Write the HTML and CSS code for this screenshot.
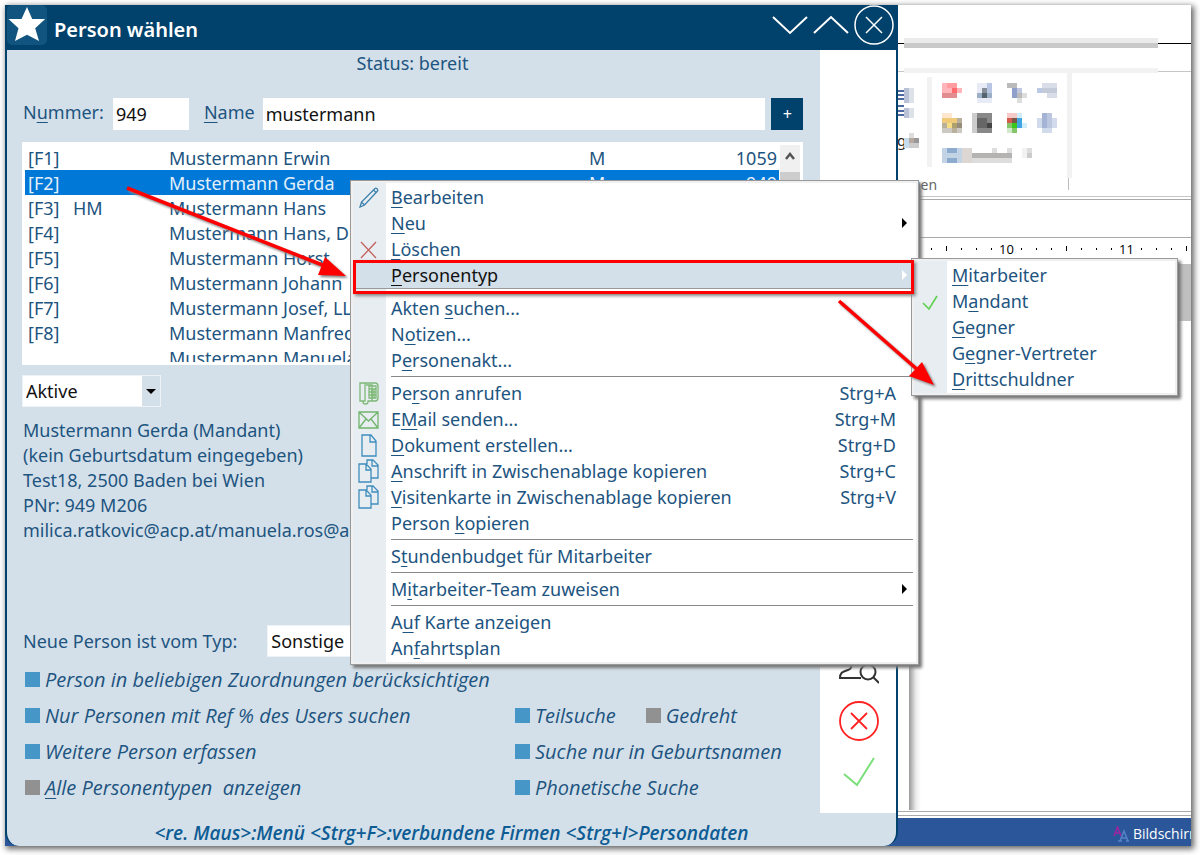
FILE: index.html
```html
<!DOCTYPE html>
<html lang="de">
<head>
<meta charset="utf-8">
<title>Person wählen</title>
<link rel="stylesheet" href="styles.css">
</head>
<body>
<main class="stage">
  <div class="dialog-area">
    <section class="dialog">
      <header class="titlebar">
        <span class="logo"><svg viewBox="0 0 40 40" width="40" height="40"><path fill="#fff" d="M20 2l5.200 12h13l-10 9.300L32 36l-12-6.300L8 36l3.500-12.700L1.500 14h13z"/></svg></span>
        <h1>Person wählen</h1>
        <div class="window-buttons">
          <button aria-label="Nach unten"><svg viewBox="0 0 36 20" width="36" height="20"><path d="M1 2l17 16L35 2"/></svg></button>
          <button aria-label="Nach oben"><svg viewBox="0 0 36 20" width="36" height="20"><path d="M1 18L18 2l17 16"/></svg></button>
          <button aria-label="Schließen"><svg class="thin" viewBox="0 0 40 40" width="40" height="40"><circle cx="20" cy="20" r="19"/><path d="M12 12l16 16M28 12L12 28"/></svg></button>
        </div>
      </header>
      <div class="body">
        <div class="content">
          <p class="status">Status: bereit</p>
          <div class="search">
            <label for="nr">N<u>u</u>mmer:</label>
            <input id="nr" class="nr" value="949">
            <label for="name"><u>N</u>ame</label>
            <input id="name" class="name" value="mustermann">
            <button class="plus">+</button>
          </div>
          <div class="list">
            <div class="rows">
              <table>
                <colgroup><col class="c-key"><col class="c-tag"><col><col class="c-kind"><col class="c-no"></colgroup>
                <tr><td>[F1]</td><td></td><td>Mustermann Erwin</td><td>M</td><td>1059</td></tr>
                <tr class="selected"><td>[F2]</td><td></td><td>Mustermann Gerda</td><td>M</td><td>949</td></tr>
                <tr><td>[F3]</td><td>HM</td><td>Mustermann Hans</td><td></td><td></td></tr>
                <tr><td>[F4]</td><td></td><td>Mustermann Hans, Dr.</td><td></td><td></td></tr>
                <tr><td>[F5]</td><td></td><td>Mustermann Horst</td><td></td><td></td></tr>
                <tr><td>[F6]</td><td></td><td>Mustermann Johann</td><td></td><td></td></tr>
                <tr><td>[F7]</td><td></td><td>Mustermann Josef, LL.M.</td><td></td><td></td></tr>
                <tr><td>[F8]</td><td></td><td>Mustermann Manfred</td><td></td><td></td></tr>
                <tr><td></td><td></td><td>Mustermann Manuela</td><td></td><td></td></tr>
              </table>
            </div>
            <div class="scroll">
              <button aria-label="Nach oben blättern"><svg viewBox="0 0 20 21" width="20" height="21"><path d="M6 14l4-5 4 5" fill="none" stroke="#555" stroke-width="2.500"/></svg></button>
              <div class="thumb"></div>
            </div>
          </div>
          <div class="combo filter">
            <select aria-label="Filter"><option>Aktive</option></select>
            <span class="drop"></span>
          </div>
          <p class="info">Mustermann Gerda (Mandant)<br>(kein Geburtsdatum eingegeben)<br>Test18, 2500 Baden bei Wien<br>PNr: 949 M206<br>milica.ratkovic@acp.at/manuela.ros@acp.at</p>
          <div class="type-row">
            <label for="typ">Neue Person ist vom Typ:</label>
            <div class="combo typ"><select id="typ"><option>Sonstige</option></select></div>
          </div>
          <div class="checks">
            <label class="wide"><input type="checkbox" checked>Person in beliebigen Zuordnungen berücksichtigen</label>
            <label><input type="checkbox" checked>Nur Personen mit Ref % des Users suchen</label>
            <div class="pair">
              <label><input type="checkbox" checked>Teilsuche</label>
              <label><input type="checkbox">Gedreht</label>
            </div>
            <label><input type="checkbox" checked>Weitere Person erfassen</label>
            <label><input type="checkbox" checked>Suche nur in Geburtsnamen</label>
            <label><input type="checkbox"><span class="pre"><u>A</u>lle Personentypen  anzeigen</span></label>
            <label><input type="checkbox" checked>Phonetische Suche</label>
          </div>
        </div>
        <aside class="side">
          <button aria-label="Person suchen"><svg viewBox="0 0 40 40" width="40" height="40" fill="none" stroke="#333" stroke-width="2"><circle cx="15" cy="6" r="7"/><path d="M22 31H1c0-6 3-6 8-8 4-1 4-4 3-8"/><circle cx="29" cy="25" r="7.500"/><path d="M34 30l6 6"/></svg></button>
          <button aria-label="Abbrechen"><svg viewBox="0 0 40 40" width="40" height="40" fill="none" stroke="#f22" stroke-width="1.800"><circle cx="20" cy="20" r="19"/><path d="M12 12l16 16M28 12L12 28"/></svg></button>
          <button aria-label="OK"><svg viewBox="0 0 40 32" width="40" height="32" fill="none" stroke="#7be07b" stroke-width="2"><path d="M5 19l13 11L35 3"/></svg></button>
        </aside>
      </div>
      <footer>&lt;re. Maus&gt;:Menü &lt;Strg+F&gt;:verbundene Firmen &lt;Strg+I&gt;Persondaten</footer>
    </section>
  </div>

  <section class="word">
    <div class="caption"><div class="smear"></div></div>
    <div class="tabs"><div class="smear"></div></div>
    <div class="ribbon">
      <svg viewBox="0 0 180 106" width="180" height="106" shape-rendering="crispEdges">
        <path fill="#f2f2f2" d="M29 5h5v90h-5zM169 0h5v106h-5z"/>
        <path stroke="#5068a0" stroke-width="1.500" d="M0 19h6M0 23h6M0 27h6M0 34h6M0 39h6M0 43h6"/>
        <text x="-1" y="74" font-size="15" fill="#222">g</text>
        <g transform="translate(6,16) scale(5)" fill="#b9c2d6"><path d="M0 0h1v3h-1zM0 4h1v2h-1z"/><path fill="#dde1e8" d="M1 0h1v3h-1zM1 4h1v2h-1z"/></g>
        <g transform="translate(6,61) scale(5)"><path fill="#c4dcee" d="M0 1h1v2h-1z"/><path fill="#ddd" d="M1 0h1v1h-1z"/><path fill="#b7a9a2" d="M1 1h1v1h-1z"/><path fill="#999" d="M2 1h1v1h-1z"/><path fill="#ccc" d="M1 2h2v1h-2z"/></g>
        <g transform="translate(44,11) scale(5)"><path fill="#ffb6ba" d="M0 0h1v2h-1zM1 1h1v1h-1zM3 1h1v1h-1z"/><path fill="#ff9c9f" d="M1 0h2v1h-2z"/><path fill="#ff6a6e" d="M2 1h1v1h-1z"/><path fill="#e28d8f" d="M0 2h3v1h-3z"/></g>
        <g transform="translate(79,11) scale(5)"><path fill="#e7ebf5" d="M0 0h2v2h-2zM0 3h3v1h-3z"/><path fill="#b6c6e4" d="M2 0h1v2h-1z"/><path fill="#868f99" d="M1 1h1v1h-1z"/><path fill="#53646f" d="M1 2h1v1h-1z"/><path fill="#9bafc5" d="M0 2h1v1h-1zM2 2h1v1h-1z"/></g>
        <g transform="translate(109,11) scale(5)"><path fill="#bbb" d="M0 0h2v1h-2zM2 2h1v1h-1z"/><path fill="#8fa0cb" d="M1 1h1v2h-1z"/><path fill="#c0c7df" d="M2 1h1v1h-1z"/><path fill="#ddd" d="M2 3h1v1h-1zM3 2h1v1h-1z"/></g>
        <g transform="translate(139,11) scale(5)"><path fill="#bcc9e5" d="M0 1h1v1h-1z"/><path fill="#d8dde8" d="M1 0h3v1h-3zM2 2h2v1h-2z"/><path fill="#c4cad7" d="M1 1h3v1h-3z"/></g>
        <g transform="translate(44,41) scale(5)"><path fill="#ffe6ce" d="M0 0h2v1h-2z"/><path fill="#efca7b" d="M0 1h3v1h-3z"/><path fill="#f5dd85" d="M1 2h1v1h-1z"/><path fill="#b8b09a" d="M0 2h1v1h-1zM3 1h1v1h-1zM2 3h1v1h-1z"/><path fill="#ada06f" d="M2 2h1v1h-1z"/><path fill="#958d79" d="M3 2h1v1h-1z"/><path fill="#cbc9c2" d="M0 3h2v1h-2zM3 3h1v1h-1z"/></g>
        <g transform="translate(74,41) scale(5)"><path fill="#ccc" d="M0 0h1v4h-1z"/><path fill="#888" d="M1 0h3v4h-3z"/><path fill="#666" d="M1 1h2v2h-2z"/><path fill="#444" d="M3 2h1v1h-1z"/></g>
        <g transform="translate(109,41) scale(5)"><path fill="#f5cac9" d="M0 0h2v1h-2z"/><path fill="#d45b4b" d="M0 1h1v1h-1z"/><path fill="#795849" d="M1 1h1v1h-1z"/><path fill="#86c66b" d="M0 2h1v1h-1zM1 3h1v1h-1z"/><path fill="#39c71b" d="M1 2h1v1h-1z"/><path fill="#41a5df" d="M2 1h1v2h-1z"/><path fill="#cfedfb" d="M2 0h1v1h-1zM3 2h1v1h-1z"/><path fill="#d2eacb" d="M0 3h1v1h-1z"/></g>
        <g transform="translate(139,41) scale(5)"><path fill="#d2dbec" d="M0 1h1v2h-1zM3 1h1v2h-1zM1 3h2v1h-2z"/><path fill="#a4b3d6" d="M1 0h1v3h-1z"/><path fill="#bcc6de" d="M2 0h1v3h-1z"/></g>
        <g transform="translate(44,76) scale(5)"><path fill="#c3d3e6" d="M0 0h4v3h-4z"/><path fill="#8daacf" d="M1 0h2v1h-2zM1 2h2v1h-2z"/><path fill="#dcd7d3" d="M4 0h2v3h-2z"/><path fill="#ddd" d="M6 2h8v1h-8zM10 0h1v1h-1zM13 0h1v1h-1zM17 0h1v1h-1z"/><path fill="#b5b3b1" d="M6 1h8v1h-8z"/><path fill="#ccc" d="M17 1h1v1h-1z"/><path fill="#f2f2f2" d="M16 0h1v2h-1z"/></g>
      </svg>
      <div class="group-label">gen</div>
    </div>
    <div class="band"></div>
    <div class="ruler"><i></i><i class="half"></i><i></i><i></i><i></i><b>10</b><i></i><i></i><i></i><i class="half"></i><i></i><i></i><i></i><b>11</b><i></i><i></i><i></i><i class="half"></i></div>
    <div class="document"><div class="page"></div><div class="margin-block"></div></div>
    <div class="rule"></div>
    <div class="taskbar"><svg viewBox="0 0 16 16" width="16" height="16" fill="none" stroke-width="1.500"><path stroke="#a3259e" d="M1 10L4.500 1 8 10M2 7h5"/><path stroke="#5583c9" d="M7 15l4-10 4 10M8 12h6M5 15h4M13 15h3"/></svg><span>Bildschirmeinstellungen</span></div>
  </section>

  <ul class="menu main-menu">
    <li><button><span class="ico"><svg viewBox="0 0 22 22" width="22" height="22" fill="none" stroke="#3c81ad" stroke-width="1.300"><path d="M2 21l1.500-5L17 2.500c1-1 3.500 1 2.500 2.500L6.500 19zM3.500 16l3 3M15.500 4l3 3"/></svg></span><span><u>B</u>earbeiten</span></button></li>
    <li><button><span class="ico"></span><span><u>N</u>eu</span><span class="more"></span></button></li>
    <li><button><span class="ico"><svg viewBox="0 0 22 22" width="22" height="22" fill="none" stroke="#c4605c" stroke-width="1.300"><path d="M3 4l15 16M18 4L3 20"/></svg></span><span><u>L</u>öschen</span></button></li>
    <li class="active"><button><span class="ico"></span><span><u>P</u>ersonentyp</span><span class="more"></span></button></li>
    <li class="after"><button><span class="ico"></span><span>Akten <u>s</u>uchen...</span></button></li>
    <li><button><span class="ico"></span><span>N<u>o</u>tizen...</span></button></li>
    <li><button><span class="ico"></span><span>P<u>e</u>rsonenakt...</span></button></li>
    <li class="sep"></li>
    <li><button><span class="ico"><svg viewBox="0 0 22 24" width="22" height="24" fill="none" stroke="#7db877" stroke-width="1.300"><path d="M7 2h10q3 0 3 3v12q0 3-3 3h-3M2 2h5v18H2zM5 20v1q0 2 2.500 2T10 21v-1h4V4H8"/><path d="M11 5h7v12h-7zM11 8h7M11 11h7M11 14h7M14 8v9M16 8v9"/></svg></span><span>Pe<u>r</u>son anrufen</span><kbd>Strg+A</kbd></button></li>
    <li><button><span class="ico"><svg viewBox="0 0 22 22" width="22" height="22" fill="none" stroke="#72b56c" stroke-width="1.300"><path d="M1 4h19v16H1zM1 4l9.500 9L20 4M1 20l7-9M20 20l-7-9"/></svg></span><span>E<u>M</u>ail senden...</span><kbd>Strg+M</kbd></button></li>
    <li><button><span class="ico"><svg viewBox="0 0 22 24" width="22" height="24" fill="none" stroke="#3f8dbd" stroke-width="1.300"><path d="M4 2h9l5 6v15H4zM12 2v7h6"/></svg></span><span><u>D</u>okument erstellen...</span><kbd>Strg+D</kbd></button></li>
    <li><button><span class="ico"><svg viewBox="0 0 22 24" width="22" height="24" fill="none" stroke="#3f8dbd" stroke-width="1.300"><path d="M1 5h7l5 5v13H1zM8 5v6h5M9 5V1h6l5 5v13h-7M14 1v6h6"/></svg></span><span><u>A</u>nschrift in Zwischenablage kopieren</span><kbd>Strg+C</kbd></button></li>
    <li><button><span class="ico"><svg viewBox="0 0 22 24" width="22" height="24" fill="none" stroke="#3f8dbd" stroke-width="1.300"><path d="M1 5h7l5 5v13H1zM8 5v6h5M9 5V1h6l5 5v13h-7M14 1v6h6"/></svg></span><span><u>V</u>isitenkarte in Zwischenablage kopieren</span><kbd>Strg+V</kbd></button></li>
    <li><button><span class="ico"></span><span>Person <u>k</u>opieren</span></button></li>
    <li class="sep"></li>
    <li><button><span class="ico"></span><span>S<u>t</u>undenbudget für Mitarbeiter</span></button></li>
    <li class="sep"></li>
    <li><button><span class="ico"></span><span>M<u>i</u>tarbeiter-Team zuweisen</span><span class="more"></span></button></li>
    <li class="sep"></li>
    <li><button><span class="ico"></span><span>A<u>u</u>f Karte anzeigen</span></button></li>
    <li><button><span class="ico"></span><span>An<u>f</u>ahrtsplan</span></button></li>
  </ul>

  <ul class="menu sub-menu">
    <li><button><span class="ico"></span><span><u>M</u>itarbeiter</span></button></li>
    <li><button><span class="ico"><svg viewBox="0 0 22 22" width="22" height="22" fill="none" stroke="#5fd04f" stroke-width="1.600"><path d="M4 13l6 6 8-13"/></svg></span><span>M<u>a</u>ndant</span></button></li>
    <li><button><span class="ico"></span><span><u>G</u>egner</span></button></li>
    <li><button><span class="ico"></span><span>G<u>e</u>gner-Vertreter</span></button></li>
    <li><button><span class="ico"></span><span><u>D</u>rittschuldner</span></button></li>
  </ul>

  <div class="highlight"></div>
  <svg class="arrow first" viewBox="0 0 224 94" width="224" height="94"><path d="M2 2l198 78" stroke="red" stroke-width="3.500"/><path d="M221 90l-28-1 7-18z" fill="red"/></svg>
  <svg class="arrow second" viewBox="0 0 102 92" width="102" height="92"><path d="M2 2l80 70" stroke="red" stroke-width="3.500"/><path d="M97 86l-25-9 13-14z" fill="red"/></svg>
</main>
</body>
</html>
```
FILE: styles.css
```css
* { box-sizing: border-box; }
body {
  margin: 0;
  padding: 5px 9px 9px 5px;
  background: #fff;
  color: #1d5480;
  font: 18px/25px "Noto Sans", "Open Sans", sans-serif;
}
h1, p, ul { margin: 0; padding: 0; }
button, input, select { font: inherit; color: inherit; border: 0; padding: 0; margin: 0; background: none; }
svg { display: block; }
u { text-underline-offset: 3px; text-decoration-thickness: 1px; }

.stage {
  position: relative;
  display: grid;
  grid-template-columns: minmax(0, 893fr) minmax(0, 293fr);
  min-height: calc(100vh - 14px);
  box-shadow: 2px 2px 6px 1px #666;
}
.dialog-area { display: flex; background: #2b579a; }
.dialog {
  flex: 1;
  display: flex;
  flex-direction: column;
  overflow: hidden;
  background: #d4e0e9;
  border: solid #00426b;
  border-width: 0 2px;
  border-radius: 0 0 14px 14px;
}

/* Title bar */
.titlebar { display: flex; align-items: center; height: 45px; background: #00426b; color: #fff; }
.logo { align-self: flex-start; margin-right: 7px; background: #11547f; border-radius: 5px; }
h1 { flex: 1; padding-top: 3px; font-size: 20px; font-weight: 600; }
.window-buttons { display: flex; align-items: center; gap: 5px; padding-right: 2px; margin-bottom: 5px; }
.window-buttons svg { fill: none; stroke: #fff; stroke-width: 2; }
.window-buttons .thin { stroke-width: 1.5; }

/* Dialog body */
.body { flex: 1; display: flex; }
.content { flex: 1; min-width: 0; padding: 1px 17px 0 15px; }
.side {
  width: 76px;
  display: flex;
  flex-direction: column;
  justify-content: flex-end;
  align-items: center;
  gap: 14px;
  padding: 0 0 26px 2px;
  background: #fff;
}
.status { text-align: center; }
.search { display: flex; align-items: center; margin-top: 22px; padding-left: 1px; }
.search input { height: 32px; padding-left: 3px; background: #fff; color: #111; }
.search label { padding-bottom: 3px; }
.search .nr { width: 76px; margin: 0 15px 0 9px; }
.search .name { flex: 1; min-width: 0; margin: 0 6px 0 8px; }
.plus { width: 32px; height: 32px; background: #00426b; color: #fff; font-size: 16px; font-style: italic; }

.list { display: flex; height: 223px; margin-top: 12px; padding: 3px; background: #fff; }
.rows { flex: 1; min-width: 0; overflow: hidden; }
table { width: 100%; table-layout: fixed; border-collapse: collapse; }
td { height: 25px; padding: 2px 0 0 3px; line-height: 23px; white-space: nowrap; }
td:last-child { text-align: right; padding-right: 2px; }
.c-key { width: 45px; }
.c-tag { width: 96px; }
.c-kind { width: 90px; }
.c-no { width: 103px; }
.selected { background: #0078d7; color: #e4f0fa; }
.scroll { width: 20px; margin-left: 1px; background: #f0f0f0; }
.thumb { height: 70px; background: #cdcdcd; }

.combo { display: flex; width: 139px; height: 32px; background: #fff; border: 1px solid #eef3f7; }
.combo select { flex: 1; min-width: 0; appearance: none; padding-left: 3px; color: #111; }
.filter { margin-top: 10px; }
.drop { display: grid; place-items: center; width: 18px; background: #d4e0e9; }
.drop::after { content: ""; border: 5px solid transparent; border-top-color: #000; border-bottom: 0; }
.info { margin-top: 11px; padding-left: 1px; }
.type-row { display: flex; align-items: center; gap: 30px; margin-top: 82px; padding-left: 1px; }
.typ { width: 200px; }

.checks {
  display: grid;
  grid-template-columns: minmax(0, 490fr) minmax(0, 288fr);
  grid-auto-rows: 36px;
  align-items: center;
  margin-top: 4px;
  padding-left: 3px;
  font-family: "Open Sans", "Noto Sans", sans-serif;
  font-size: 20px;
  font-style: italic;
}
.checks label { display: flex; align-items: center; gap: 5px; white-space: nowrap; }
.wide { grid-column: 1 / -1; }
.pair { display: flex; gap: 30px; }
.pre { white-space: pre; }
.checks input { appearance: none; width: 15px; height: 15px; background: #919191; }
.checks input:checked { background: #4697c8; }
footer {
  height: 33px;
  padding-top: 8px;
  text-align: center;
  color: #0d5c94;
  font-family: "Open Sans", "Noto Sans", sans-serif;
  font-size: 19px;
  font-weight: 600;
  font-style: italic;
}

/* Word processor window */
.word { display: flex; flex-direction: column; overflow: hidden; background: #fff; }
.caption { position: relative; height: 39px; border-bottom: 1px solid #000; }
.tabs { position: relative; height: 28px; border-bottom: 1px solid #c6c6c6; }
.smear { position: absolute; left: 6px; right: 33px; }
.caption .smear { top: 33px; height: 10px; background: linear-gradient(#ebebeb 50%, #c9c9c9 50%); }
.tabs .smear { top: 24px; height: 5px; background: #f2f2f2; }
.ribbon { height: 125px; border-bottom: 1px solid #c6c6c6; }
.group-label {
  width: 171px;
  height: 12px;
  padding-left: 14px;
  border-right: 1px solid #bbb;
  color: #666;
  font-size: 14px;
  line-height: 14px;
}
.band { height: 39px; margin-top: 2px; border: solid #aaa; border-width: 1px 0; }
.ruler { display: flex; align-items: center; height: 26px; padding: 0 0 5px 26px; color: #000; font: 13px/16px "Open Sans", sans-serif; }
.ruler i, .ruler b { flex: 0 0 15px; display: flex; justify-content: center; font-weight: 400; }
.ruler i::before { content: ""; width: 1px; height: 2px; background: #000; }
.ruler .half::before { height: 5px; }
.document { flex: 1; display: flex; justify-content: space-between; }
.page { width: 12px; margin-left: 11px; background: linear-gradient(90deg, #999, #eee 60%, #fff); }
.margin-block { width: 14px; height: 57px; background: #bfbfbf; }
.rule { height: 5px; margin: 1px 0 2px; border: solid #aaa; border-width: 1px 0; }
.taskbar { display: flex; align-items: center; gap: 4px; height: 28px; padding: 3px 0 0 215px; background: #2b579a; color: #fff; font-family: "Open Sans", sans-serif; font-size: 14px; }
.taskbar svg { flex: none; }

/* Context menus */
.menu {
  position: absolute;
  list-style: none;
  padding: 3px;
  background: linear-gradient(90deg, #e8edf1 35px, #fff 35px);
  border: 1px solid #999;
  box-shadow: inset 0 0 0 2px #f0f0f0, 3px 3px 3px #777;
}
.menu button { display: flex; align-items: center; width: 100%; height: 26px; text-align: left; white-space: nowrap; }
.ico { flex: 0 0 37px; padding-left: 4px; }
.main-menu { left: 345px; top: 175px; width: 569px; }
.sub-menu { left: 906px; top: 253px; width: 267px; }
.menu kbd { margin-left: auto; padding-right: 19px; font: inherit; }
.more { margin: 0 8px 0 auto; border: 5px solid transparent; border-left-color: #000; border-right: 0; }
.sep { height: 7px; margin: 0 2px 0 37px; padding-top: 3px; }
.sep::before { content: ""; display: block; height: 1px; background: #888; }
.active { background: #d4e0e9; color: #111; border-bottom: 1px solid #999; }
.active .more { border-left-color: #fff; }
.after { margin-top: 6px; }

/* Annotations */
.highlight { position: absolute; left: 348px; top: 255px; width: 561px; height: 34px; border: 3px solid red; box-shadow: 2px 2px 3px #888; }
.arrow { position: absolute; filter: drop-shadow(2px 2px 1px #888); }
.first { left: 120px; top: 181px; }
.second { left: 832px; top: 294px; }
```
